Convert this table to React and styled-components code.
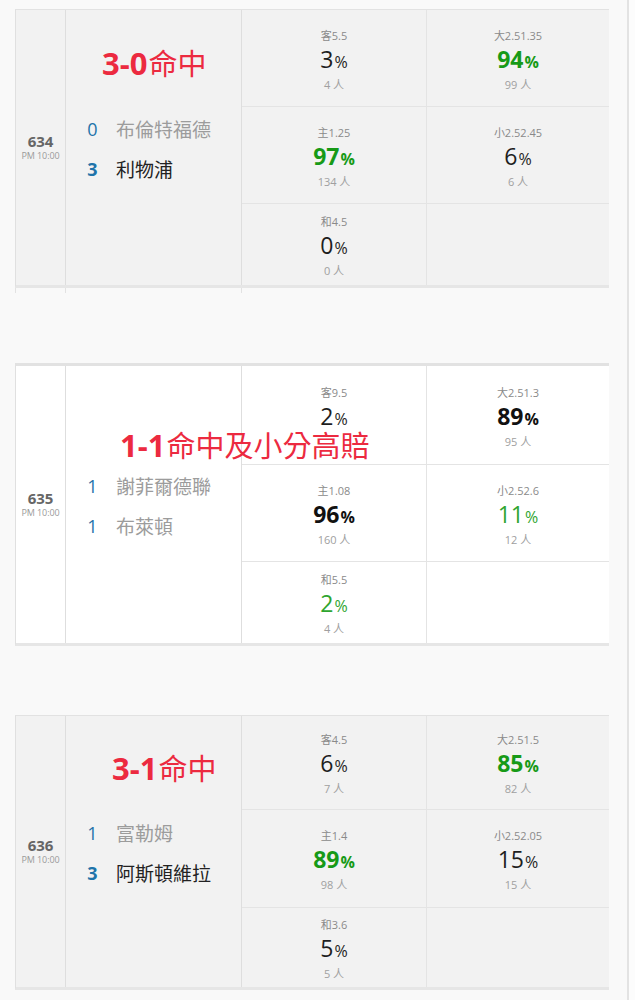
import React from 'react'
import styled, { createGlobalStyle } from 'styled-components'

const GlobalStyle = createGlobalStyle`
  html, body {
    margin: 0;
    padding: 0;
    background: #f9f9f9;
  }
  * {
    box-sizing: border-box;
  }
`

const Page = styled.div`
  display: flex;
  min-height: 1000px;
  font-family: "Open Sans", "Noto Sans CJK TC", sans-serif;
`

const Feed = styled.main`
  width: 609px;
  padding-left: 15px;
  display: flex;
  flex-direction: column;
`

const Rail = styled.aside`
  flex: 1;
  margin-left: 18px;
  border-left: 2px solid #e3e3e3;
  background: #fcfcfc;
`

const Card = styled.section`
  position: relative;
  display: grid;
  grid-template-columns: 50px 176px 185px 182px;
  grid-template-rows: ${(p) => p.$rows};
  margin-top: ${(p) => p.$gap}px;
  background: ${(p) => p.$bg};
  border-top: ${(p) => p.$topBorder}px solid #e2e2e2;
  border-bottom: 3px solid #e6e6e6;
  border-left: 1px solid #e0e0e0;
`

const Tail = styled.div`
  display: grid;
  grid-template-columns: 50px 176px 1fr;
  height: 5px;

  span {
    border-left: 1px solid #e2e2e2;
  }
`

const Info = styled.div`
  grid-row: 1 / span 3;
  grid-column: 1;
  display: flex;
  flex-direction: column;
  align-items: center;
  justify-content: center;
  border-right: 1px solid #dedede;
`

const MatchNo = styled.div`
  font-size: 15px;
  line-height: 17px;
  font-weight: 700;
  color: #666;
`

const KickOff = styled.div`
  font-size: 9px;
  line-height: 12px;
  color: #9a9a9a;
  letter-spacing: -0.1px;
`

const Teams = styled.div`
  grid-row: 1 / span 3;
  grid-column: 2;
  display: flex;
  flex-direction: column;
  justify-content: center;
  gap: 14px;
  padding: 2px 0 0 13px;
  border-right: 1px solid #dedede;
`

const TeamRow = styled.div`
  display: flex;
  align-items: center;
  height: 26px;
`

const Score = styled.span`
  width: 27px;
  margin-right: 10px;
  text-align: center;
  font-size: 18px;
  font-weight: ${(p) => (p.$win ? 700 : 400)};
  color: #1f74aa;
`

const TeamName = styled.span`
  font-family: "Noto Sans CJK TC", sans-serif;
  font-size: 19px;
  color: ${(p) => (p.$win ? '#222' : '#9c9c9c')};
`

const Cell = styled.div`
  display: flex;
  flex-direction: column;
  align-items: center;
  justify-content: center;
  padding-top: 4px;
  border-top: ${(p) => (p.$first ? 'none' : '1px solid #e4e4e4')};
  border-right: ${(p) => (p.$left ? '1px solid #e4e4e4' : 'none')};
`

const OddsLabel = styled.div`
  font-size: 11px;
  line-height: 14px;
  color: #8a8a8a;
`

const tones = {
  plain: { color: '#1e1e1e', weight: 400 },
  dark: { color: '#111', weight: 700 },
  green: { color: '#2fa52f', weight: 400 },
  greenBold: { color: '#179a17', weight: 700 }
}

const Pct = styled.div`
  margin-top: 5px;
  font-size: 23px;
  line-height: 22px;
  font-weight: ${(p) => tones[p.$tone].weight};
  color: ${(p) => tones[p.$tone].color};

  small {
    font-size: 16px;
    margin-left: 1px;
  }
`

const Count = styled.div`
  margin-top: 5px;
  min-height: 14px;
  font-size: 11px;
  line-height: 14px;
  color: #a0a0a0;
`

const Note = styled.div`
  position: absolute;
  left: ${(p) => p.$left}px;
  top: ${(p) => p.$top}px;
  font-family: "Noto Sans CJK TC", sans-serif;
  font-size: 29px;
  line-height: 30px;
  color: #ec2a40;
  white-space: nowrap;

  b {
    font-family: "Open Sans", "Noto Sans CJK TC", sans-serif;
    font-weight: 700;
    font-size: 31px;
    line-height: 30px;
    margin-right: 1px;
  }
`

const matches = [
  {
    id: '634',
    gap: 9,
    topBorder: 1,
    rows: '96px 97px 82px',
    bg: '#f2f2f2',
    tail: true,
    note: { score: '3-0', text: '命中', left: 86, top: 37 },
    teams: [
      { score: '0', name: '布倫特福德', win: false },
      { score: '3', name: '利物浦', win: true }
    ],
    cells: [
      { label: '客5.5', pct: 3, count: 4 },
      { label: '大2.51.35', pct: 94, count: 99, tone: 'greenBold' },
      { label: '主1.25', pct: 97, count: 134, tone: 'greenBold' },
      { label: '小2.52.45', pct: 6, count: 6 },
      { label: '和4.5', pct: 0, count: 0 },
      null
    ]
  },
  {
    id: '635',
    gap: 70,
    topBorder: 3,
    rows: '98px 97px 82px',
    bg: '#ffffff',
    note: { score: '1-1', text: '命中及小分高賠', left: 104, top: 63 },
    teams: [
      { score: '1', name: '謝菲爾德聯', win: false },
      { score: '1', name: '布萊頓', win: false }
    ],
    cells: [
      { label: '客9.5', pct: 2, count: null },
      { label: '大2.51.3', pct: 89, count: 95, tone: 'dark' },
      { label: '主1.08', pct: 96, count: 160, tone: 'dark' },
      { label: '小2.52.6', pct: 11, count: 12, tone: 'green' },
      { label: '和5.5', pct: 2, count: 4, tone: 'green' },
      null
    ]
  },
  {
    id: '636',
    gap: 69,
    topBorder: 1,
    rows: '93px 98px 80px',
    bg: '#f2f2f2',
    note: { score: '3-1', text: '命中', left: 96, top: 36 },
    teams: [
      { score: '1', name: '富勒姆', win: false },
      { score: '3', name: '阿斯頓維拉', win: true }
    ],
    cells: [
      { label: '客4.5', pct: 6, count: 7 },
      { label: '大2.51.5', pct: 85, count: 82, tone: 'greenBold' },
      { label: '主1.4', pct: 89, count: 98, tone: 'greenBold' },
      { label: '小2.52.05', pct: 15, count: 15 },
      { label: '和3.6', pct: 5, count: 5 },
      null
    ]
  }
]

const OddsCell = ({ cell, index }) => (
  <Cell $first={index < 2} $left={index % 2 === 0}>
    {cell && (
      <>
        <OddsLabel>{cell.label}</OddsLabel>
        <Pct $tone={cell.tone || 'plain'}>
          {cell.pct}
          <small>%</small>
        </Pct>
        <Count>{cell.count === null ? '' : `${cell.count} 人`}</Count>
      </>
    )}
  </Cell>
)

const MatchCard = ({ match }) => (
  <>
    <Card $rows={match.rows} $gap={match.gap} $bg={match.bg} $topBorder={match.topBorder}>
      <Info>
        <MatchNo>{match.id}</MatchNo>
        <KickOff>PM 10:00</KickOff>
      </Info>
      <Teams>
        {match.teams.map((team, i) => (
          <TeamRow key={i}>
            <Score $win={team.win}>{team.score}</Score>
            <TeamName $win={team.win}>{team.name}</TeamName>
          </TeamRow>
        ))}
      </Teams>
      {match.cells.map((cell, i) => (
        <OddsCell key={i} cell={cell} index={i} />
      ))}
      <Note $left={match.note.left} $top={match.note.top}>
        <b>{match.note.score}</b>
        {match.note.text}
      </Note>
    </Card>
    {match.tail && (
      <Tail>
        <span />
        <span />
        <span />
      </Tail>
    )}
  </>
)

export default function App() {
  return (
    <>
      <GlobalStyle />
      <Page>
        <Feed>
          {matches.map((m) => (
            <MatchCard key={m.id} match={m} />
          ))}
        </Feed>
        <Rail />
      </Page>
    </>
  )
}
